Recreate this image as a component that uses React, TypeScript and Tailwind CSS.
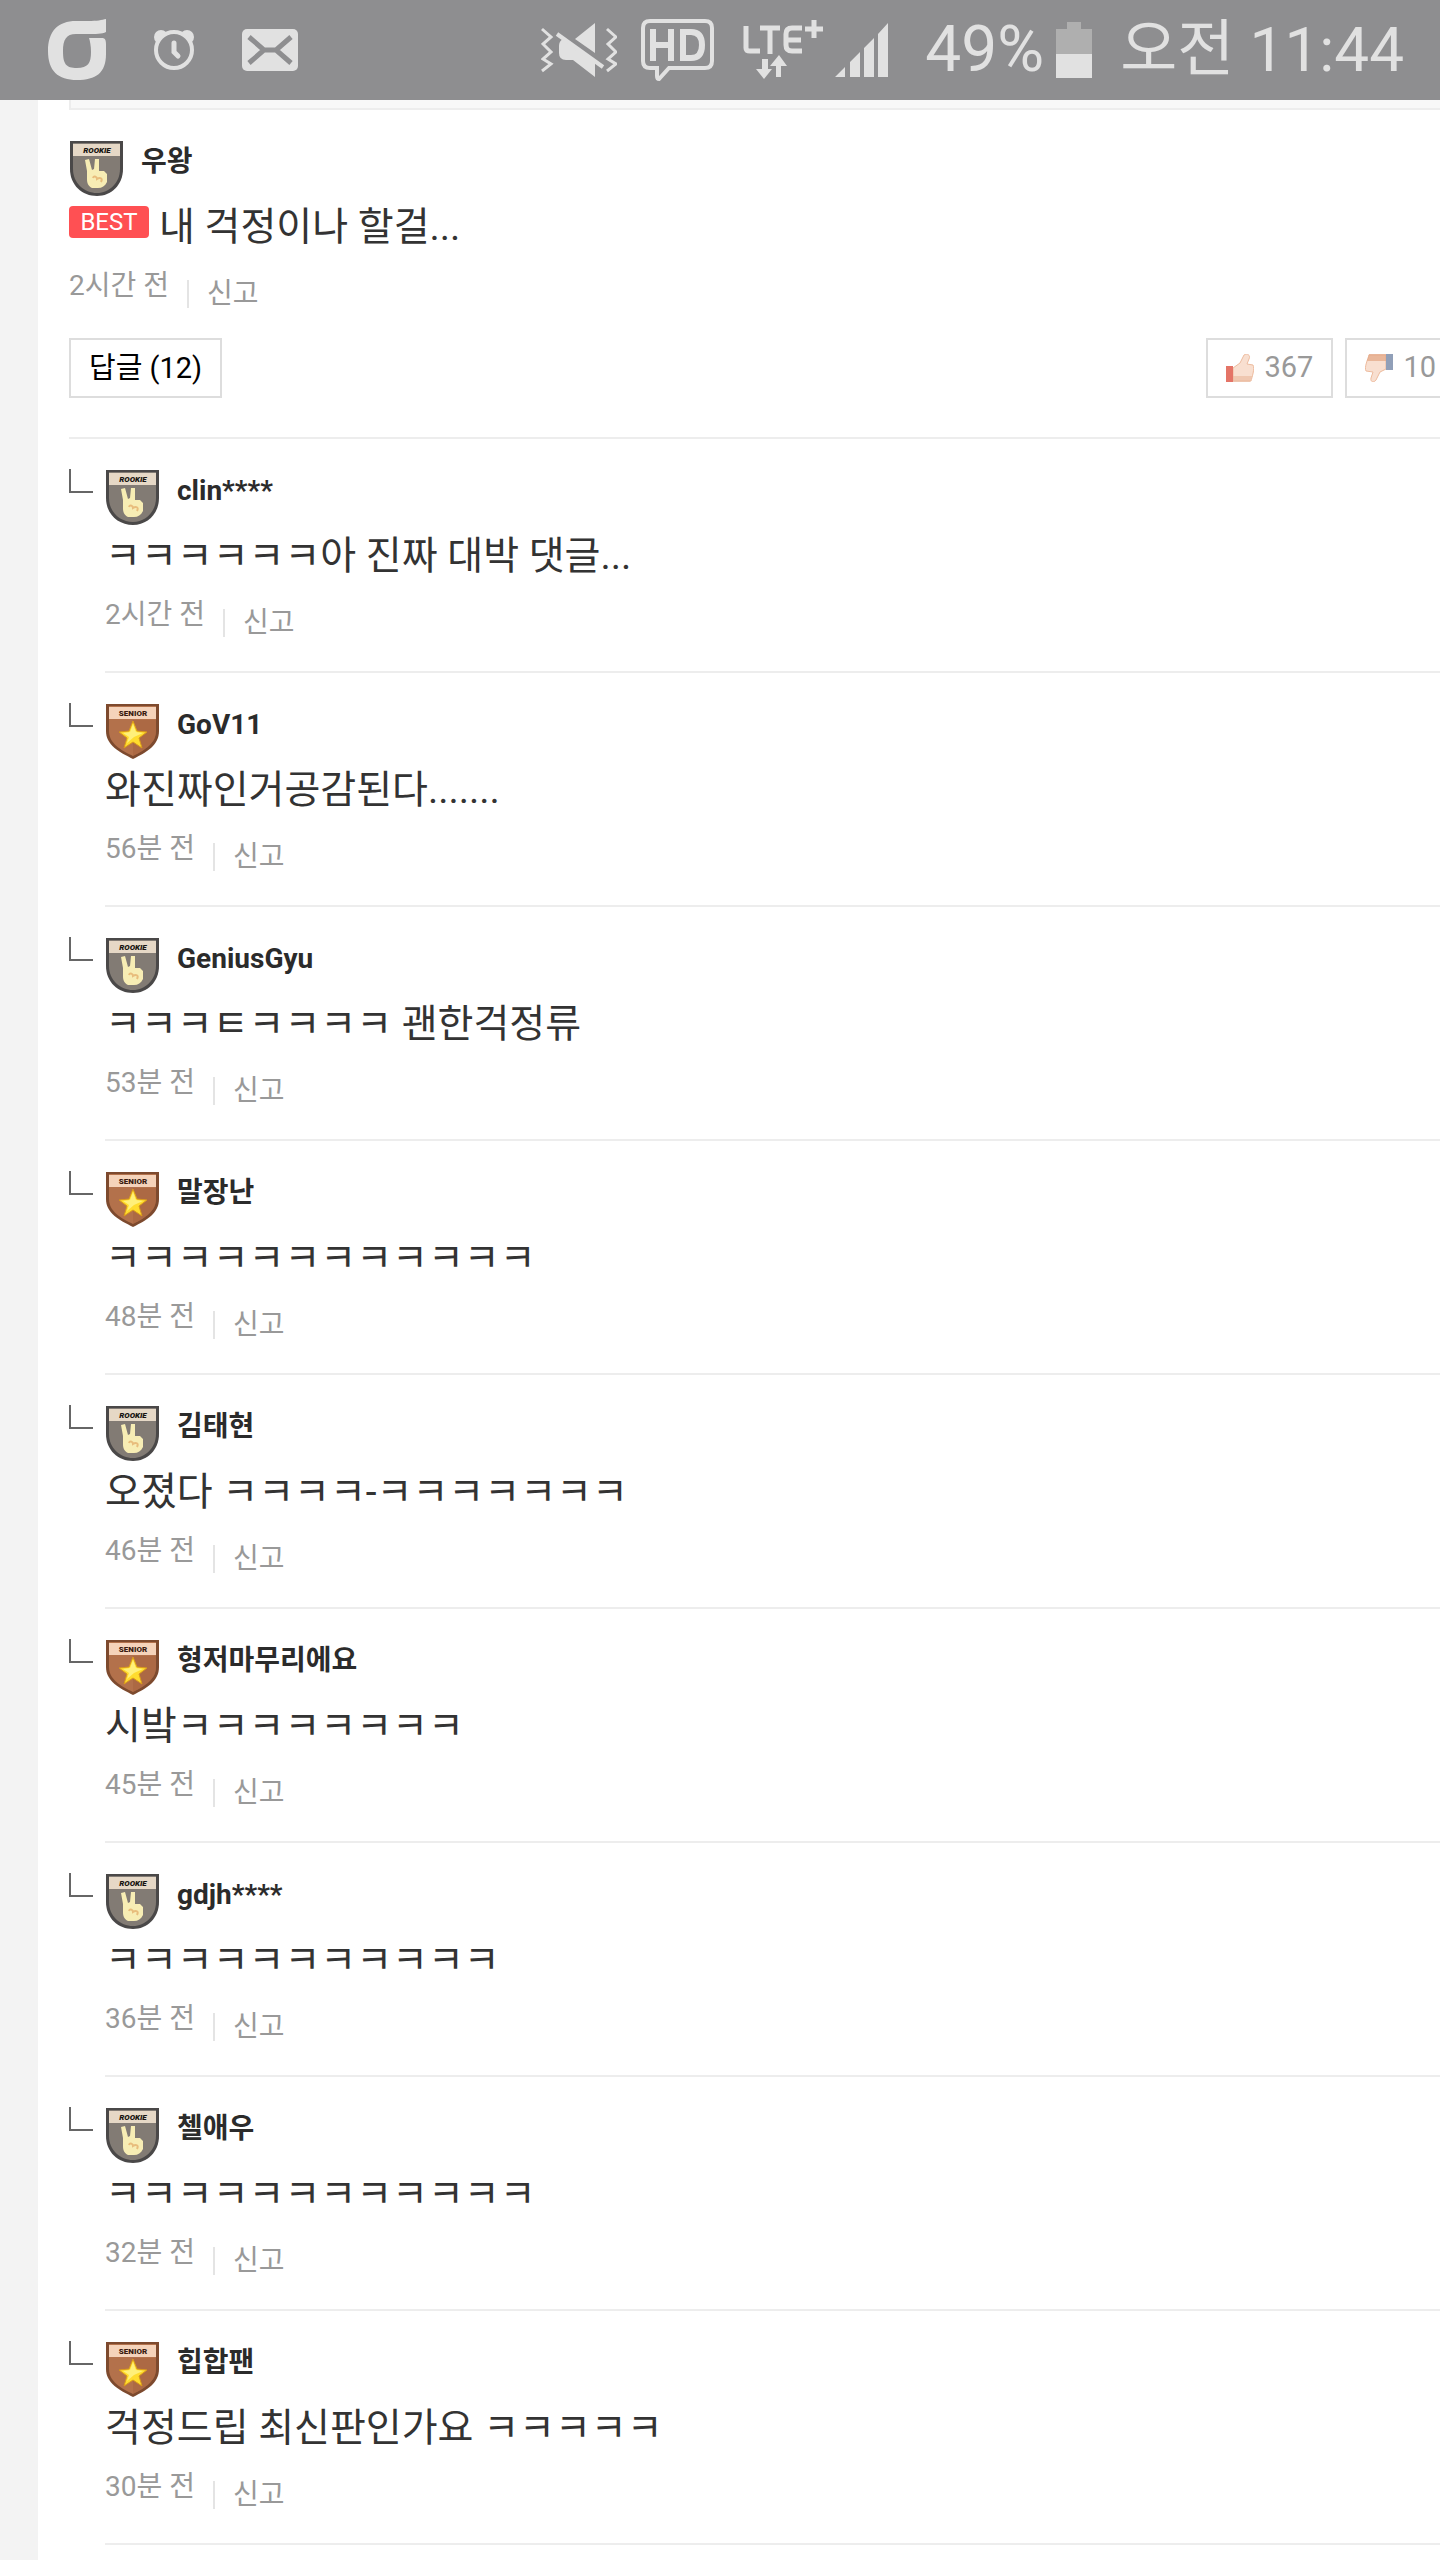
type Level = 'rookie' | 'senior';

type Reply = {
  name: string;
  level: Level;
  text: string;
  time: string;
};

const replies: Reply[] = [
  { name: 'clin****', level: 'rookie', text: 'ㅋㅋㅋㅋㅋㅋ아 진짜 대박 댓글...', time: '2시간 전' },
  { name: 'GoV11', level: 'senior', text: '와진짜인거공감된다.......', time: '56분 전' },
  { name: 'GeniusGyu', level: 'rookie', text: 'ㅋㅋㅋㅌㅋㅋㅋㅋ 괜한걱정류', time: '53분 전' },
  { name: '말장난', level: 'senior', text: 'ㅋㅋㅋㅋㅋㅋㅋㅋㅋㅋㅋㅋ', time: '48분 전' },
  { name: '김태현', level: 'rookie', text: '오졌다 ㅋㅋㅋㅋ-ㅋㅋㅋㅋㅋㅋㅋ', time: '46분 전' },
  { name: '형저마무리에요', level: 'senior', text: '시밬ㅋㅋㅋㅋㅋㅋㅋㅋ', time: '45분 전' },
  { name: 'gdjh****', level: 'rookie', text: 'ㅋㅋㅋㅋㅋㅋㅋㅋㅋㅋㅋ', time: '36분 전' },
  { name: '첼애우', level: 'rookie', text: 'ㅋㅋㅋㅋㅋㅋㅋㅋㅋㅋㅋㅋ', time: '32분 전' },
  { name: '힙합팬', level: 'senior', text: '걱정드립 최신판인가요 ㅋㅋㅋㅋㅋ', time: '30분 전' },
];

const LevelBadge = ({ level }: { level: Level }) => {
  if (level === 'senior') {
    return (
      <svg className="h-14 w-14 shrink-0" viewBox="0 0 56 56" role="img" aria-label="senior">
        <path d="M1 1H54V28C54 42 42 49 28 56C14 49 1 42 1 28Z" fill="#7d4a2e" />
        <path d="M4 3H51V28C51 40 40 47 28 53C15 47 4 40 4 28Z" fill="#b3714b" />
        <path d="M28 17H51V28C51 40 40 47 28 53Z" fill="#a5623e" opacity="0.5" />
        <path d="M4 4H51V16H4Z" fill="#f5d3ba" />
        <text x="28" y="13" textAnchor="middle" className="font-['Roboto',sans-serif] text-[8px] font-black" fill="#3a1c10">SENIOR</text>
        <path d="M28 18L32 28L42 29L34 35L37 45L28 39L19 45L22 35L14 29L24 28Z" fill="#ffdc2e" stroke="#d99a1b" strokeWidth="1" />
        <path d="M28 21L31 29L38 30L29 34L22 40L24 34L18 30L25 29Z" fill="#fff07a" />
      </svg>
    );
  }
  return (
    <svg className="h-14 w-14 shrink-0" viewBox="0 0 56 56" role="img" aria-label="rookie">
      <path d="M1 1H54V29C54 45 42 56 28 56C13 56 1 45 1 29Z" fill="#4a4848" />
      <path d="M4 3H51V29C51 43 40 53 28 53C15 53 4 43 4 29Z" fill="#827b74" />
      <path d="M4 4H51V16H4Z" fill="#e6d8c6" />
      <text x="28" y="13" textAnchor="middle" className="font-['Roboto',sans-serif] text-[8px] font-black italic" fill="#171411">ROOKIE</text>
      <path d="M16 20L20 19L23 30L25 29L26 19L30 19L30 31H35L38 34V42C36 46 33 48 29 48H23C19 46 18 43 18 39V31Z" fill="#f7edb4" />
      <path d="M24 38C25 35 28 37 28 39C31 37 34 38 32 42" fill="none" stroke="#e8bd7c" strokeWidth="2" />
    </svg>
  );
};

const ThumbUp = () => (
  <svg className="h-7 w-7" viewBox="0 0 28 28" aria-hidden="true">
    <path d="M7 14L14 9L18 1C21-1 25 1 23 5L21 10L27 11C29 15 26 23 25 27H7Z" fill="#f8dfd0" stroke="#edbb9e" strokeWidth="1" />
    <path d="M7 22H26L24 28H7Z" fill="#e9b79b" opacity="0.6" />
    <path d="M0 12H7V28H0Z" fill="#e47467" />
  </svg>
);

const ThumbDown = () => (
  <svg className="h-7 w-7" viewBox="0 0 28 28" aria-hidden="true">
    <path d="M21 15L15 18L11 26C9 29 5 28 6 24L8 18L1 17C-1 13 3 5 4 1H21Z" fill="#f8dfd0" stroke="#edbb9e" strokeWidth="1" />
    <path d="M4 0H21V7H2Z" fill="#e3a583" opacity="0.7" />
    <path d="M21 0H28V16H21Z" fill="#909fb8" />
  </svg>
);

const StatusBar = () => (
  <header className="flex h-[100px] items-center justify-between bg-[#8e8e90] pr-9 pl-12 text-[#e1e1e1]">
    <div className="flex items-center">
      {/* Carrier logo */}
      <svg className="h-[62px] w-[58px]" viewBox="0 0 58 62" fill="currentColor" aria-hidden="true">
        <path d="M58 0V13C54 15 48 15 39 15H28C18 15 15 21 15 32C15 45 18 49 29 49C40 49 43 44 43 33C43 27 42 22 41 19H54C57 19 58 21 58 25V35C58 54 48 61 29 61C10 61 0 52 0 32C0 12 10 2 28 2H40C49 2 54 1 58 0Z" />
      </svg>
      {/* Alarm */}
      <svg className="ml-12 h-10 w-10" viewBox="0 0 40 40" aria-hidden="true">
        <circle cx="7" cy="7" r="7" fill="currentColor" />
        <circle cx="33" cy="7" r="7" fill="currentColor" />
        <circle cx="20" cy="20" r="18" fill="#8e8e90" stroke="currentColor" strokeWidth="4" />
        <path d="M20 13V22L24 26" fill="none" stroke="currentColor" strokeWidth="5" strokeLinecap="round" />
      </svg>
      {/* Mail */}
      <svg className="ml-12 h-[42px] w-14" viewBox="0 0 56 42" aria-hidden="true">
        <rect width="56" height="42" rx="5" fill="currentColor" />
        <path d="M7 8L22 21L7 34M49 8L34 21L49 34M22 21H34" fill="none" stroke="#8e8e90" strokeWidth="5" />
      </svg>
    </div>
    <div className="flex items-center">
      {/* Vibrate, muted */}
      <svg className="h-14 w-[76px]" viewBox="0 0 76 56" aria-hidden="true">
        <path d="M54 1V31L34 17ZM54 55L32 38H25Q18 38 18 31V24Q18 19 22 17L54 40Z" fill="currentColor" />
        <path d="M16 12L62 45" stroke="currentColor" strokeWidth="4" />
        <path d="M1 7L10 15L2 22L10 30L2 37L10 42L1 49M66 7L75 15L67 22L75 30L67 37L75 42L66 49" fill="none" stroke="currentColor" strokeWidth="3" />
      </svg>
      {/* HD voice */}
      <svg className="ml-6 h-[62px] w-[74px]" viewBox="0 0 74 62" fill="none" stroke="currentColor" aria-hidden="true">
        <path d="M9 2H64Q71 2 71 9V42Q71 49 64 49H28L18 60Q16 60 16 57V49H9Q2 49 2 42V9Q2 2 9 2Z" strokeWidth="4" />
        <path d="M12 10V42M30 10V42M12 26H30M42 13V39H50Q61 39 61 26Q61 13 50 13Z" strokeWidth="6" />
      </svg>
      {/* Network */}
      <svg className="ml-7 h-[60px] w-20" viewBox="0 0 80 60" fill="none" stroke="currentColor" aria-hidden="true">
        <path d="M3 6V28Q3 31 7 31H17M17 8H37M27 8V34M59 8H49Q43 8 43 14V25Q43 31 49 31H59M44 20H58M71 0V18M62 9H80" strokeWidth="5" />
        <path d="M19 39H25V49H29L21 59L13 49H19ZM33 57V46H27L36 35L44 46H38V57Z" fill="currentColor" stroke="none" />
      </svg>
      {/* Signal */}
      <svg className="ml-3 h-[54px] w-[54px]" viewBox="0 0 54 54" fill="currentColor" aria-hidden="true">
        <path d="M0 54L10 44V54ZM15 39L25 29V54H15ZM29 25L39 15V54H29ZM43 11L53 0V54H43Z" />
      </svg>
      <span className="ml-9 text-[64px] leading-none">49%</span>
      <svg className="ml-3 h-14 w-9" viewBox="0 0 36 56" aria-hidden="true">
        <path d="M11 0H25V7H36V32H0V7H11Z" fill="#afafaf" />
        <path d="M0 32H36V56H0Z" fill="currentColor" />
      </svg>
      <span className="ml-7 text-[62px] leading-none">오전 11:44</span>
    </div>
  </header>
);

const Meta = ({ time }: { time: string }) => (
  <div className="mt-4 flex h-10 items-start text-[28px] leading-8 text-[#999]">
    <time>{time}</time>
    <a href="#report" className="mt-2 ml-[18px] flex items-center">
      <span className="mr-[18px] h-7 w-0.5 bg-[#e4e4e4]"></span>
      신고
    </a>
  </div>
);

const ReplyItem = ({ reply }: { reply: Reply }) => (
  <li className="flex">
    <span className="mt-[30px] mr-3 h-6 w-6 shrink-0 border-b-2 border-l-2 border-[#666]"></span>
    <article className="flex-1 border-b-2 border-[#ededed] pt-[30px] pb-8">
      <div className="flex">
        <LevelBadge level={reply.level} />
        <strong className="ml-4 pt-1 text-[28px] leading-9 font-bold text-[#2b2b2b]">{reply.name}</strong>
      </div>
      <p className="mt-1 text-[39px] leading-[54px] text-[#333]">{reply.text}</p>
      <Meta time={reply.time} />
    </article>
  </li>
);

const App = () => (
  <div className="flex min-h-screen flex-col overflow-x-hidden bg-[#f3f3f3] font-['Roboto','Noto_Sans_CJK_KR',sans-serif]">
    <StatusBar />
    <main className="ml-[38px] flex-1 bg-white pl-[31px]">
      <div className="h-[10px] border-b-2 border-l-2 border-[#ededed] bg-[#f8f8f8]"></div>
      <article className="border-b-2 border-[#ededed] pt-[30px] pb-[39px]">
        <div className="flex">
          <LevelBadge level="rookie" />
          <strong className="ml-4 pt-1 text-[28px] leading-9 font-bold text-[#2b2b2b]">우왕</strong>
        </div>
        <p className="mt-1 flex text-[39px] leading-[54px] text-[#333]">
          <span className="mt-1.5 mr-2.5 h-8 w-20 rounded-sm bg-[#ff5053] text-center text-[24px] leading-8 text-white">BEST</span>
          내 걱정이나 할걸...
        </p>
        <Meta time="2시간 전" />
        <div className="mt-7 flex justify-between">
          <button className="h-[60px] border-2 border-[#ddd] px-[18px] text-[29px] leading-8 text-black">답글 (12)</button>
          <div className="flex gap-3 text-[29px] text-[#999]">
            <button className="flex h-[60px] items-center gap-2.5 border-2 border-[#ddd] px-[18px]" aria-label="like">
              <ThumbUp />367
            </button>
            <button className="flex h-[60px] items-center gap-2.5 border-2 border-r-0 border-[#ddd] pr-1 pl-[18px]" aria-label="dislike">
              <ThumbDown />10
            </button>
          </div>
        </div>
      </article>
      <ul>
        {replies.map((reply) => (
          <ReplyItem key={reply.name} reply={reply} />
        ))}
      </ul>
    </main>
  </div>
);

export default App;
